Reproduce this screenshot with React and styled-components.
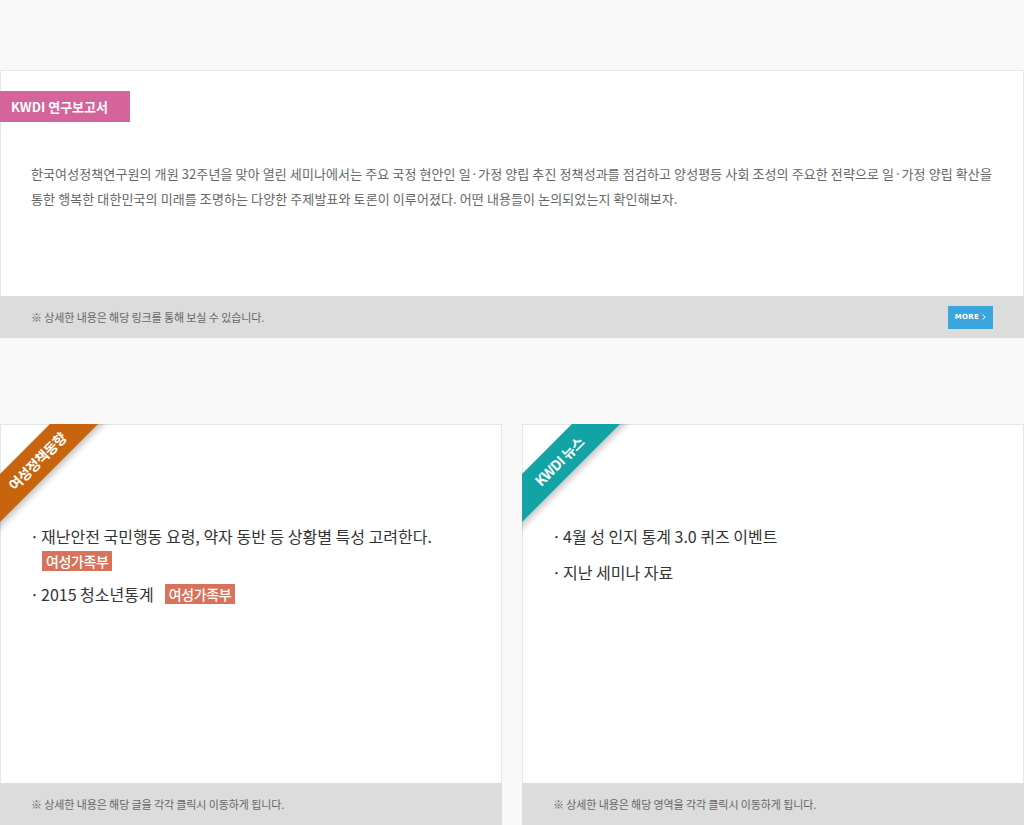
import React from "react"
import styled, { createGlobalStyle } from "styled-components"

const Global = createGlobalStyle`
  html, body {
    margin: 0;
    padding: 0;
    background: #f8f8f8;
  }
  body {
    font-family: "Noto Sans CJK KR", "Noto Sans", sans-serif;
    color: #333;
  }
  * {
    box-sizing: border-box;
  }
`
const Page = styled.div`
  width: 1024px;
  padding-top: 70px;
`
const Card = styled.section`
  position: relative;
  overflow: hidden;
`
const Body = styled.div`
  background: #fff;
  border: 1px solid #e6e6e6;
  border-bottom: none;
  height: ${(p) => p.$height}px;
`
const Footer = styled.div`
  height: 42px;
  background: #dcdcdc;
  display: flex;
  align-items: center;
  justify-content: space-between;
  padding: 0 31px;
  font-size: 11px;
  letter-spacing: -0.1px;
  color: #666;
`
const Badge = styled.h2`
  margin: 20px 0 0 -1px;
  width: 130px;
  height: 31px;
  line-height: 31px;
  padding-left: 11px;
  background: #d5649b;
  color: #fff;
  font-size: 13px;
  font-weight: 700;
`
const Summary = styled.p`
  margin: 39px 0 0 30px;
  font-size: 13px;
  line-height: 25px;
  letter-spacing: 0.1px;
  color: #666;
  white-space: nowrap;
`
const More = styled.a`
  display: flex;
  align-items: center;
  justify-content: center;
  gap: 3px;
  width: 45px;
  height: 23px;
  background: #3ba5dd;
  color: #fff;
  font-family: "DejaVu Sans", sans-serif;
  font-size: 7px;
  font-weight: 700;
  letter-spacing: 0.3px;
  text-decoration: none;
`
const Gap = styled.div`
  height: 86px;
`
const Columns = styled.div`
  display: grid;
  grid-template-columns: 502px 502px;
  gap: 20px;
`
const Ribbon = styled.div`
  position: absolute;
  left: -43px;
  top: 20px;
  width: 160px;
  height: 34px;
  line-height: 34px;
  transform: rotate(-45deg);
  background: ${(p) => p.$color};
  box-shadow: 0 4px 6px rgba(0, 0, 0, 0.22);
  color: #fff;
  text-align: center;
  font-size: 14px;
  font-weight: 700;
  letter-spacing: -0.5px;
`
const List = styled.ul`
  list-style: none;
  margin: 0;
  padding: 99px 20px 0 27px;
`
const Item = styled.li`
  padding-left: 11px;
  text-indent: -11px;
  font-size: 16px;
  line-height: 25px;
  color: #333;
  margin-bottom: 11px;
  &::before {
    content: "·";
    display: inline-block;
    width: 11px;
    text-indent: 0;
    padding-left: 2px;
  }
`
const Tag = styled.span`
  display: ${(p) => (p.$below ? "table" : "inline-block")};
  margin: ${(p) => (p.$below ? "2px 0 0 3px" : "0 0 0 11px")};
  text-indent: 0;
  height: 20px;
  line-height: 20px;
  padding: 0 4px;
  background: #d9725a;
  color: #fff;
  font-size: 14px;
  font-weight: 500;
  letter-spacing: -0.4px;
  vertical-align: 1px;
`

const Chevron = () => (
  <svg width="4" height="6" viewBox="0 0 4 6">
    <path d="M0.6 0.5 L3.2 3 L0.6 5.5" fill="none" stroke="#fff" strokeWidth="1" />
  </svg>
)

export default function App() {
  return (
    <Page>
      <Global />
      <Card>
        <Body $height={226}>
          <Badge>KWDI 연구보고서</Badge>
          <Summary>
            한국여성정책연구원의 개원 32주년을 맞아 열린 세미나에서는 주요 국정 현안인 일·가정 양립 추진
            정책성과를 점검하고 양성평등 사회 조성의 주요한 전략으로 일·가정 양립 확산을
            <br />
            통한 행복한 대한민국의 미래를 조명하는 다양한 주제발표와 토론이 이루어졌다. 어떤
            내용들이 논의되었는지 확인해보자.
          </Summary>
        </Body>
        <Footer>
          <span>※ 상세한 내용은 해당 링크를 통해 보실 수 있습니다.</span>
          <More href="#">
            MORE <Chevron />
          </More>
        </Footer>
      </Card>
      <Gap />
      <Columns>
        <Card>
          <Body $height={359}>
            <Ribbon $color="#c8640e">여성정책동향</Ribbon>
            <List>
              <Item>
                재난안전 국민행동 요령, 약자 동반 등 상황별 특성 고려한다.
                <Tag $below>여성가족부</Tag>
              </Item>
              <Item>
                2015 청소년통계<Tag>여성가족부</Tag>
              </Item>
            </List>
          </Body>
          <Footer>
            <span>※ 상세한 내용은 해당 글을 각각 클릭시 이동하게 됩니다.</span>
          </Footer>
        </Card>
        <Card>
          <Body $height={359}>
            <Ribbon $color="#12a3a5">KWDI 뉴스</Ribbon>
            <List>
              <Item>4월 성 인지 통계 3.0 퀴즈 이벤트</Item>
              <Item>지난 세미나 자료</Item>
            </List>
          </Body>
          <Footer>
            <span>※ 상세한 내용은 해당 영역을 각각 클릭시 이동하게 됩니다.</span>
          </Footer>
        </Card>
      </Columns>
    </Page>
  )
}
